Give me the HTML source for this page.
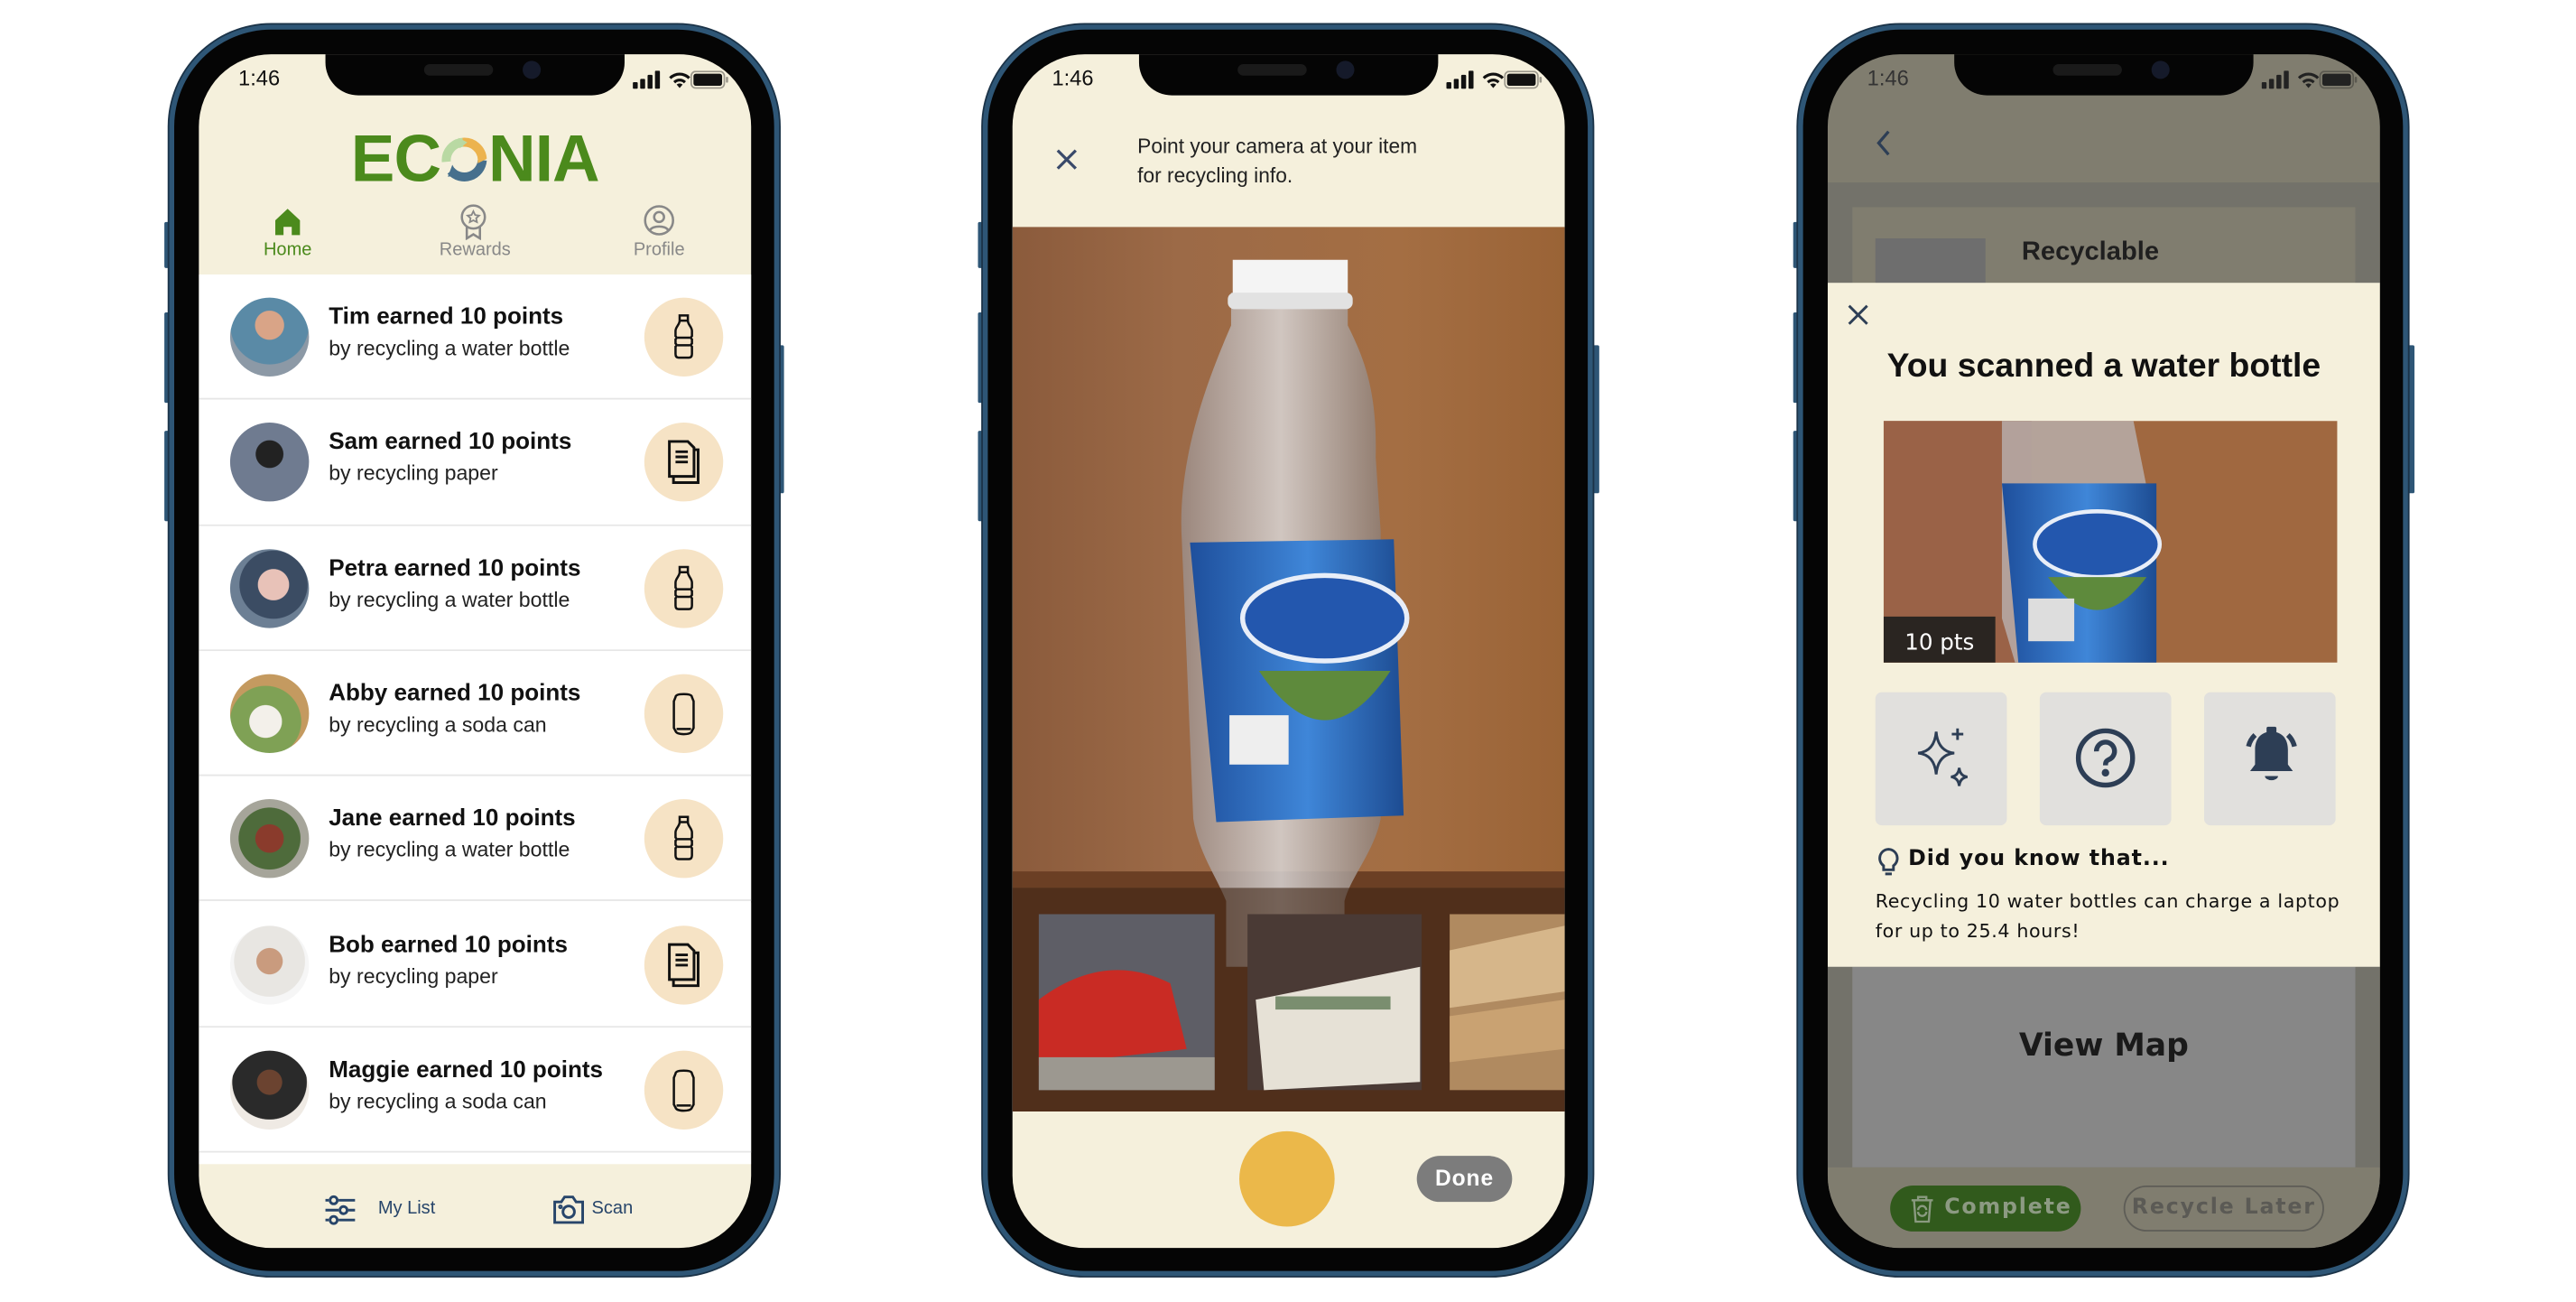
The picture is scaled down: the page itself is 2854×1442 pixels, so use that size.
<!DOCTYPE html>
<html><head><meta charset="utf-8">
<style>
*{margin:0;padding:0;box-sizing:border-box}
html,body{width:2854px;height:1442px;background:#fff;overflow:hidden}
#w{position:absolute;left:0;top:0;width:1568px;height:792px;transform:scale(1.821);transform-origin:0 0;font-family:"Liberation Sans",sans-serif}
.frame{position:absolute;top:15px;width:371px;height:761px;border-radius:62px;background:#2e5676;box-shadow:0 0 0 1px #1b3348}
.frame .bez{position:absolute;inset:3px;border-radius:59px;background:#050505}
.btn{position:absolute;width:4px;background:#2e5676;border-radius:1px}
.scr{position:absolute;left:18px;top:18px;width:336px;height:726px;border-radius:44px;overflow:hidden;background:#f5f0dc}
.notch{position:absolute;left:77px;top:-2px;width:182px;height:27px;background:#050505;border-radius:0 0 20px 20px;z-index:5}
.notch .sp{position:absolute;left:60px;top:8px;width:42px;height:7px;border-radius:4px;background:#1a1a1a}
.notch .cam{position:absolute;left:120px;top:6px;width:11px;height:11px;border-radius:50%;background:#151a2a}
.time{position:absolute;left:24px;top:7px;font-size:13px;color:#111;z-index:6}
.stat{position:absolute;right:12px;top:9px;z-index:6}
.abs{position:absolute}
.row{position:absolute;left:0;width:336px;height:76.3px;border-bottom:1px solid #e6e6e6;background:#fff}
.av{position:absolute;left:19px;top:14px;width:48px;height:48px;border-radius:50%}
.rt{position:absolute;left:79px;top:18px;font-size:14.3px;font-weight:bold;color:#111}
.rs{position:absolute;left:79px;top:38px;font-size:12.7px;color:#222}
.ic{position:absolute;left:271px;top:14px;width:48px;height:48px;border-radius:50%;background:#f6e3c5}
.ic svg{position:absolute;left:9px;top:9px;width:30px;height:30px}
</style></head><body><div id="w">

<svg width="0" height="0" style="position:absolute">
<defs>
<symbol id="bottle" viewBox="0 0 24 24"><path d="M10 1.5h4v2.5h-4z M10 4 C10 6 8 7 8 9 v2.5 q1 .8 0 1.6 v2 q1 .8 0 1.6 v3.5 q0 1.8 1.5 1.8 h5 q1.5 0 1.5-1.8 v-3.5 q-1-.8 0-1.6 v-2 q-1-.8 0-1.6 V9 c0-2-2-3-2-5 M9 12.3h6 M9 16h6" fill="none" stroke="#111" stroke-width="1.1"/></symbol>
<symbol id="paper" viewBox="0 0 24 24"><path d="M5 2h9l3 3v14H5z M17 5v0 M8 7h6 M8 9.5h6 M8 12h6 M17 6h2v16H7v-3" fill="none" stroke="#111" stroke-width="1.3"/></symbol>
<symbol id="can" viewBox="0 0 24 24"><path d="M8 4 q0-1.5 4-1.5 q4 0 4 1.5 l.8 2 v13 l-.8 1.5 q-.5 1.5-4 1.5 q-3.5 0-4-1.5 l-.8-1.5 v-13z M8.5 19.5 h7" fill="none" stroke="#111" stroke-width="1.1"/></symbol>
<symbol id="sig" viewBox="0 0 17 11"><rect x="0" y="7" width="3" height="4" rx=".6"/><rect x="4.5" y="5" width="3" height="6" rx=".6"/><rect x="9" y="2.5" width="3" height="8.5" rx=".6"/><rect x="13.5" y="0" width="3" height="11" rx=".6"/></symbol>
<symbol id="wifi" viewBox="0 0 16 12"><path d="M8 11.5l2-2.3a3 3 0 0 0-4 0z M3.8 7a6 6 0 0 1 8.4 0l-1.3 1.4a4 4 0 0 0-5.8 0z M1 4.2a10 10 0 0 1 14 0l-1.3 1.4a8 8 0 0 0-11.4 0z"/></symbol>
<symbol id="bat" viewBox="0 0 26 12"><rect x=".5" y=".5" width="22" height="11" rx="3" fill="none" stroke-opacity=".4" stroke="currentColor"/><rect x="2" y="2" width="19" height="8" rx="1.6"/><rect x="23.5" y="4" width="1.5" height="4" rx=".7" opacity=".4"/></symbol>
</defs></svg>

<!-- ============ PHONE 1 ============ -->
<div class="btn" style="left:100px;top:135px;height:28px"></div>
<div class="btn" style="left:100px;top:190px;height:55px"></div>
<div class="btn" style="left:100px;top:262px;height:55px"></div>
<div class="btn" style="left:473px;top:210px;height:90px"></div>
<div class="frame" style="left:103px"><div class="bez"></div>
<div class="scr">
  <div class="notch"><div class="sp"></div><div class="cam"></div></div>
  <div class="time">1:46</div>
  <div class="stat"><svg width="60" height="12" fill="#111"><use href="#sig" x="0" y="0" width="17" height="11"/><use href="#wifi" x="21" y="0" width="15" height="11"/><use href="#bat" x="35" y="0" width="24" height="11" color="#111"/></svg></div>
  <div class="abs" style="left:0;top:44px;width:336px;text-align:center;font-family:'Liberation Sans Narrow','Liberation Sans',sans-serif;font-weight:bold;font-size:40px;color:#4b8a1c;letter-spacing:-0.5px;line-height:40px">EC<svg width="31" height="31" viewBox="0 0 34 34" style="vertical-align:-3px;margin:0 -1px"><path d="M5 18 A12 12 0 0 1 16 5" fill="none" stroke="#b9d9a3" stroke-width="6"/><path d="M16 5 A12 12 0 0 1 29 16" fill="none" stroke="#ecb34e" stroke-width="6"/><path d="M29 17 A12 12 0 0 1 8 24" fill="none" stroke="#47708d" stroke-width="6"/><path d="M26 12l6 4-6 3z" fill="#ecb34e"/><path d="M9 20l-3 8 7-1z" fill="#47708d"/><path d="M13 2l6 3-5 4z" fill="#b9d9a3"/></svg>NIA</div>
  <svg class="abs" style="left:45px;top:93px" width="18" height="18" viewBox="0 0 18 18"><path d="M9 1L1.5 8v9h5v-5h5v5h5V8z" fill="#4b8a1c"/></svg>
  <div class="abs" style="left:30px;top:113px;width:48px;text-align:center;font-size:11px;color:#4b8a1c">Home</div>
  <svg class="abs" style="left:158px;top:91px" width="18" height="22" viewBox="0 0 18 22"><circle cx="9" cy="8" r="7" fill="none" stroke="#888" stroke-width="1.4"/><path d="M9 4.5l1.1 2.3 2.4.3-1.8 1.6.5 2.4L9 10l-2.2 1.1.5-2.4L5.5 7.1l2.4-.3z" fill="none" stroke="#888" stroke-width="1"/><path d="M5 14v7l4-2.5 4 2.5v-7" fill="none" stroke="#888" stroke-width="1.4"/></svg>
  <div class="abs" style="left:138px;top:113px;width:60px;text-align:center;font-size:11px;color:#888">Rewards</div>
  <svg class="abs" style="left:270px;top:91px" width="20" height="20" viewBox="0 0 20 20"><circle cx="10" cy="10" r="8.5" fill="none" stroke="#888" stroke-width="1.4"/><circle cx="10" cy="8" r="3" fill="none" stroke="#888" stroke-width="1.4"/><path d="M4.5 16c1.5-3 9.5-3 11 0" fill="none" stroke="#888" stroke-width="1.4"/></svg>
  <div class="abs" style="left:250px;top:113px;width:60px;text-align:center;font-size:11px;color:#888">Profile</div>

  <div class="abs" style="left:0;top:134px;width:336px;height:541px;background:#fff">
    <div class="row" style="top:0"><div class="av" style="background:radial-gradient(circle at 50% 35%,#d9a487 0 22%,#5a8aa6 23% 60%,#8c99a6 61%)"></div><div class="rt">Tim earned 10 points</div><div class="rs">by recycling a water bottle</div><div class="ic"><svg><use href="#bottle"/></svg></div></div>
    <div class="row" style="top:76.3px"><div class="av" style="background:radial-gradient(circle at 50% 40%,#222 0 22%,#6f7b90 23%)"></div><div class="rt">Sam earned 10 points</div><div class="rs">by recycling paper</div><div class="ic"><svg><use href="#paper"/></svg></div></div>
    <div class="row" style="top:152.6px"><div class="av" style="background:radial-gradient(circle at 55% 45%,#e8c2b8 0 25%,#3b4c63 26% 55%,#6c7f94 56%)"></div><div class="rt">Petra earned 10 points</div><div class="rs">by recycling a water bottle</div><div class="ic"><svg><use href="#bottle"/></svg></div></div>
    <div class="row" style="top:228.9px"><div class="av" style="background:radial-gradient(circle at 45% 60%,#f3f0ea 0 25%,#7fa155 26% 55%,#c49a60 56%)"></div><div class="rt">Abby earned 10 points</div><div class="rs">by recycling a soda can</div><div class="ic"><svg><use href="#can"/></svg></div></div>
    <div class="row" style="top:305.2px"><div class="av" style="background:radial-gradient(circle at 50% 50%,#8a3b2c 0 25%,#4e6b3b 26% 55%,#a6a59a 56%)"></div><div class="rt">Jane earned 10 points</div><div class="rs">by recycling a water bottle</div><div class="ic"><svg><use href="#bottle"/></svg></div></div>
    <div class="row" style="top:381.5px"><div class="av" style="background:radial-gradient(circle at 50% 45%,#c99b7e 0 22%,#e8e6e2 23% 60%,#f6f6f6 61%)"></div><div class="rt">Bob earned 10 points</div><div class="rs">by recycling paper</div><div class="ic"><svg><use href="#paper"/></svg></div></div>
    <div class="row" style="top:457.8px"><div class="av" style="background:radial-gradient(circle at 50% 40%,#6b4330 0 20%,#2a2a2a 21% 60%,#efeae4 61%)"></div><div class="rt">Maggie earned 10 points</div><div class="rs">by recycling a soda can</div><div class="ic"><svg><use href="#can"/></svg></div></div>
  </div>
  <svg class="abs" style="left:76px;top:693px" width="20" height="20" viewBox="0 0 20 20" fill="none" stroke="#27456a" stroke-width="1.6"><path d="M1 4h2M9 4h10M1 10h8M15 10h4M1 16h2M9 16h10"/><circle cx="6" cy="4" r="2.2"/><circle cx="12" cy="10" r="2.2"/><circle cx="6" cy="16" r="2.2"/></svg>
  <div class="abs" style="left:109px;top:696px;font-size:11px;color:#27456a">My List</div>
  <svg class="abs" style="left:215px;top:693px" width="20" height="19" viewBox="0 0 20 19" fill="none" stroke="#27456a" stroke-width="1.6"><path d="M1.5 5h4l2-3h5l2 3h4v12.5h-17z"/><circle cx="10" cy="11" r="3.5"/><circle cx="5" cy="8" r=".6"/></svg>
  <div class="abs" style="left:239px;top:696px;font-size:11px;color:#27456a">Scan</div>
</div></div>

<!-- ============ PHONE 2 ============ -->
<div class="btn" style="left:595px;top:135px;height:28px"></div>
<div class="btn" style="left:595px;top:190px;height:55px"></div>
<div class="btn" style="left:595px;top:262px;height:55px"></div>
<div class="btn" style="left:969px;top:210px;height:90px"></div>
<div class="frame" style="left:598px"><div class="bez"></div>
<div class="scr">
  <div class="notch"><div class="sp"></div><div class="cam"></div></div>
  <div class="time">1:46</div>
  <div class="stat"><svg width="60" height="12" fill="#111"><use href="#sig" width="17" height="11"/><use href="#wifi" x="21" width="15" height="11"/><use href="#bat" x="35" width="24" height="11" color="#111"/></svg></div>
  <svg class="abs" style="left:26px;top:57px" width="14" height="14" viewBox="0 0 14 14"><path d="M1.5 1.5l11 11M12.5 1.5l-11 11" stroke="#3a4a6a" stroke-width="1.8"/></svg>
  <div class="abs" style="left:76px;top:47px;font-size:12.5px;line-height:18px;color:#222">Point your camera at your item<br>for recycling info.</div>
  <svg class="abs" style="left:0;top:105px" width="336" height="538" viewBox="0 0 336 538">
    <defs>
      <linearGradient id="wood" x1="0" x2="1"><stop offset="0" stop-color="#8b5b3c"/><stop offset=".3" stop-color="#9c6a47"/><stop offset=".7" stop-color="#a46e43"/><stop offset="1" stop-color="#9a6336"/></linearGradient>
      <linearGradient id="glass" x1="0" x2="1"><stop offset="0" stop-color="#9b8c86"/><stop offset=".5" stop-color="#d9d6d6"/><stop offset="1" stop-color="#8f8078"/></linearGradient>
      <linearGradient id="lbl" x1="0" x2="1"><stop offset="0" stop-color="#1e4f9c"/><stop offset=".55" stop-color="#3f86d8"/><stop offset="1" stop-color="#1d4c92"/></linearGradient>
    </defs>
    <rect width="336" height="538" fill="url(#wood)"/>
    <rect y="392" width="336" height="146" fill="#6b3f24"/>
    <path d="M133 60 L133 40 L204 40 L204 60 C214 80 222 100 221 140 L224 185 L224 360 C220 380 206 395 202 410 L202 450 L130 450 L130 410 C124 395 113 380 110 360 L103 190 C100 140 120 90 133 60Z" fill="url(#glass)" opacity=".85"/>
    <path d="M108 192 L232 190 L238 358 L124 362 Z" fill="url(#lbl)"/>
    <ellipse cx="190" cy="238" rx="50" ry="26" fill="#2357ae" stroke="#e8eef8" stroke-width="3"/>
    <path d="M150 270 q40 60 80 0 z" fill="#5e8a3c"/>
    <rect x="132" y="297" width="36" height="30" fill="#eee"/>
    <path d="M134 20 h70 v22 h-70z" fill="#f4f4f4"/><rect x="131" y="40" width="76" height="10" rx="4" fill="#e2e2e2"/>
    <rect y="402" width="336" height="136" fill="#3e2516" opacity=".6"/>
    <rect x="16" y="418" width="107" height="107" fill="#5e5e66"/><path d="M16 470 q40-30 80-10 l10 40 -90 10z" fill="#c92b24"/><rect x="16" y="505" width="107" height="20" fill="#9c9890"/>
    <rect x="143" y="418" width="106" height="107" fill="#4a3a35"/><path d="M148 470 l100-20 0 70 -95 5z" fill="#e6e1d6"/><rect x="160" y="468" width="70" height="8" fill="#7a8e6f"/>
    <rect x="266" y="418" width="70" height="107" fill="#b08a60"/><path d="M266 440 l70-15 v40 l-70 10z" fill="#d6b68a"/><path d="M266 480 l70-10 v30 l-70 8z" fill="#c9a272"/>
  </svg>
  <div class="abs" style="left:138px;top:655px;width:58px;height:58px;border-radius:50%;background:#ebb84a"></div>
  <div class="abs" style="left:246px;top:670px;width:58px;height:28px;border-radius:14px;background:#7c7c7c;color:#fff;font-size:13.5px;font-weight:bold;text-align:center;line-height:28px;letter-spacing:.5px">Done</div>
</div></div>

<!-- ============ PHONE 3 ============ -->
<div class="btn" style="left:1091px;top:135px;height:28px"></div>
<div class="btn" style="left:1091px;top:190px;height:55px"></div>
<div class="btn" style="left:1091px;top:262px;height:55px"></div>
<div class="btn" style="left:1465px;top:210px;height:90px"></div>
<div class="frame" style="left:1094px"><div class="bez"></div>
<div class="scr" style="background:#807d6f">
  <div class="notch"><div class="sp"></div><div class="cam"></div></div>
  <div class="time" style="color:#333">1:46</div>
  <div class="stat"><svg width="60" height="12" fill="#222"><use href="#sig" width="17" height="11"/><use href="#wifi" x="21" width="15" height="11"/><use href="#bat" x="35" width="24" height="11" color="#222"/></svg></div>
  <svg class="abs" style="left:28px;top:45px" width="12" height="18" viewBox="0 0 12 18"><path d="M9 2L3 9l6 7" fill="none" stroke="#2d3e55" stroke-width="1.8"/></svg>
  <div class="abs" style="left:0;top:78px;width:336px;height:599px;background:#73726a"></div>
  <div class="abs" style="left:15px;top:93px;width:306px;height:60px;background:#807d6f"></div>
  <div class="abs" style="left:29px;top:112px;width:67px;height:40px;background:#6e6e6e"></div>
  <div class="abs" style="left:118px;top:112px;font-size:16px;font-weight:bold;color:#1f1f1f">Recyclable</div>
  <div class="abs" style="left:15px;top:555px;width:306px;height:122px;background:#878787"></div>
  <div class="abs" style="left:0;top:592px;width:336px;text-align:center;font-family:'DejaVu Sans',sans-serif;font-size:19px;font-weight:bold;color:#1a1a1a">View Map</div>
  <div class="abs" style="left:0;top:677px;width:336px;height:49px;background:#807d6f"></div>
  <div class="abs" style="left:38px;top:688px;width:116px;height:28px;border-radius:14px;background:#315a1c"></div>
  <svg class="abs" style="left:50px;top:694px" width="15" height="17" viewBox="0 0 15 17" fill="none" stroke="#8a9a80" stroke-width="1.3"><path d="M1 3h13M5 3V1h5v2M2.5 3l1 13h8l1-13"/><path d="M5 9a2.5 2.5 0 0 1 5 0M10 10a2.5 2.5 0 0 1-5 0"/></svg>
  <div class="abs" style="left:71px;top:694px;font-family:'DejaVu Sans',sans-serif;font-size:13px;font-weight:bold;color:#8c9a82;letter-spacing:1px">Complete</div>
  <div class="abs" style="left:180px;top:688px;width:122px;height:28px;border-radius:14px;border:1.3px solid #5e5d57;text-align:center;line-height:26px;font-family:'DejaVu Sans',sans-serif;font-size:13px;font-weight:bold;color:#5b5a55;letter-spacing:1px">Recycle Later</div>

  <div class="abs" style="left:0;top:139px;width:336px;height:416px;background:#f5f0dc">
    <svg class="abs" style="left:12px;top:13px" width="13" height="13" viewBox="0 0 13 13"><path d="M1 1l11 11M12 1L1 12" stroke="#2d3e55" stroke-width="1.6"/></svg>
    <div class="abs" style="left:0;top:39px;width:336px;text-align:center;font-size:20.5px;font-weight:bold;color:#111">You scanned a water bottle</div>
    <svg class="abs" style="left:34px;top:84px" width="276" height="147" viewBox="0 0 276 147">
      <rect width="276" height="147" fill="#a06840"/><rect width="90" height="147" fill="#9a6247"/>
      <path d="M72 0 h80 l8 40 v80 l-10 27 h-70 l-8-27 v-80z" fill="#b9b2b0" opacity=".8"/>
      <path d="M72 38 L166 38 L166 147 L82 147 Z" fill="url(#lbl)"/>
      <ellipse cx="130" cy="75" rx="38" ry="20" fill="#2357ae" stroke="#e8eef8" stroke-width="2.5"/>
      <path d="M100 95 q30 40 60 0z" fill="#5e8a3c"/>
      <rect x="88" y="108" width="28" height="26" fill="#ddd"/>
      <rect x="0" y="119" width="68" height="28" fill="#2a2521"/>
      <text x="34" y="139" text-anchor="middle" font-family="DejaVu Sans, sans-serif" font-size="13.5" fill="#fff">10 pts</text>
    </svg>
    <div class="abs" style="left:29px;top:249px;width:80px;height:81px;border-radius:4px;background:#e1e0dd"></div>
    <div class="abs" style="left:129px;top:249px;width:80px;height:81px;border-radius:4px;background:#e1e0dd"></div>
    <div class="abs" style="left:229px;top:249px;width:80px;height:81px;border-radius:4px;background:#e1e0dd"></div>
    <svg class="abs" style="left:46px;top:262px" width="48" height="54" viewBox="0 0 48 54" fill="none" stroke="#2d3e55" stroke-width="1.6"><path d="M20 11 Q21 23 31 24 Q21 25 20 37 Q19 25 9 24 Q19 23 20 11Z"/><path d="M33 9v7M29.5 12.5h7"/><path d="M34 33 Q34.5 38 39 38.5 Q34.5 39 34 44 Q33.5 39 29 38.5 Q33.5 38 34 33Z"/></svg>
    <svg class="abs" style="left:150px;top:270px" width="38" height="38" viewBox="0 0 38 38" fill="none" stroke="#2d3e55" stroke-width="3"><circle cx="19" cy="19" r="16.5"/><path d="M13.5 15a5.5 5.5 0 1 1 7.5 5c-1.5.7-2 1.5-2 3.5"/><circle cx="19" cy="28" r=".8" fill="#2d3e55"/></svg>
    <svg class="abs" style="left:249px;top:267px" width="42" height="42" viewBox="0 0 42 42"><path d="M21 6c-7 0-10 5-10 11v9l-3 4h26l-3-4v-9c0-6-3-11-10-11z" fill="#2d3e55"/><rect x="18" y="3" width="6" height="4" rx="1" fill="#2d3e55"/><path d="M17 33a4 2.5 0 0 0 8 0z" fill="#2d3e55"/><path d="M7 15a14 14 0 0 1 4-7M35 15a14 14 0 0 0-4-7" fill="none" stroke="#2d3e55" stroke-width="3"/></svg>
    <svg class="abs" style="left:30px;top:343px" width="14" height="18" viewBox="0 0 14 18" fill="none" stroke="#2d3e55" stroke-width="1.6"><path d="M7 1.5a5.5 5.5 0 0 0-3 10v2.5h6v-2.5a5.5 5.5 0 0 0-3-10z"/><path d="M5 16.5h4"/></svg>
    <div class="abs" style="left:49px;top:343px;font-family:'DejaVu Sans',sans-serif;font-size:13px;font-weight:bold;color:#111;letter-spacing:.5px">Did you know that...</div>
    <div class="abs" style="left:29px;top:368px;font-family:'DejaVu Sans',sans-serif;font-size:11.3px;line-height:18px;color:#111;letter-spacing:.35px">Recycling 10 water bottles can charge a laptop<br>for up to 25.4 hours!</div>
  </div>
</div></div>

</div></body></html>
